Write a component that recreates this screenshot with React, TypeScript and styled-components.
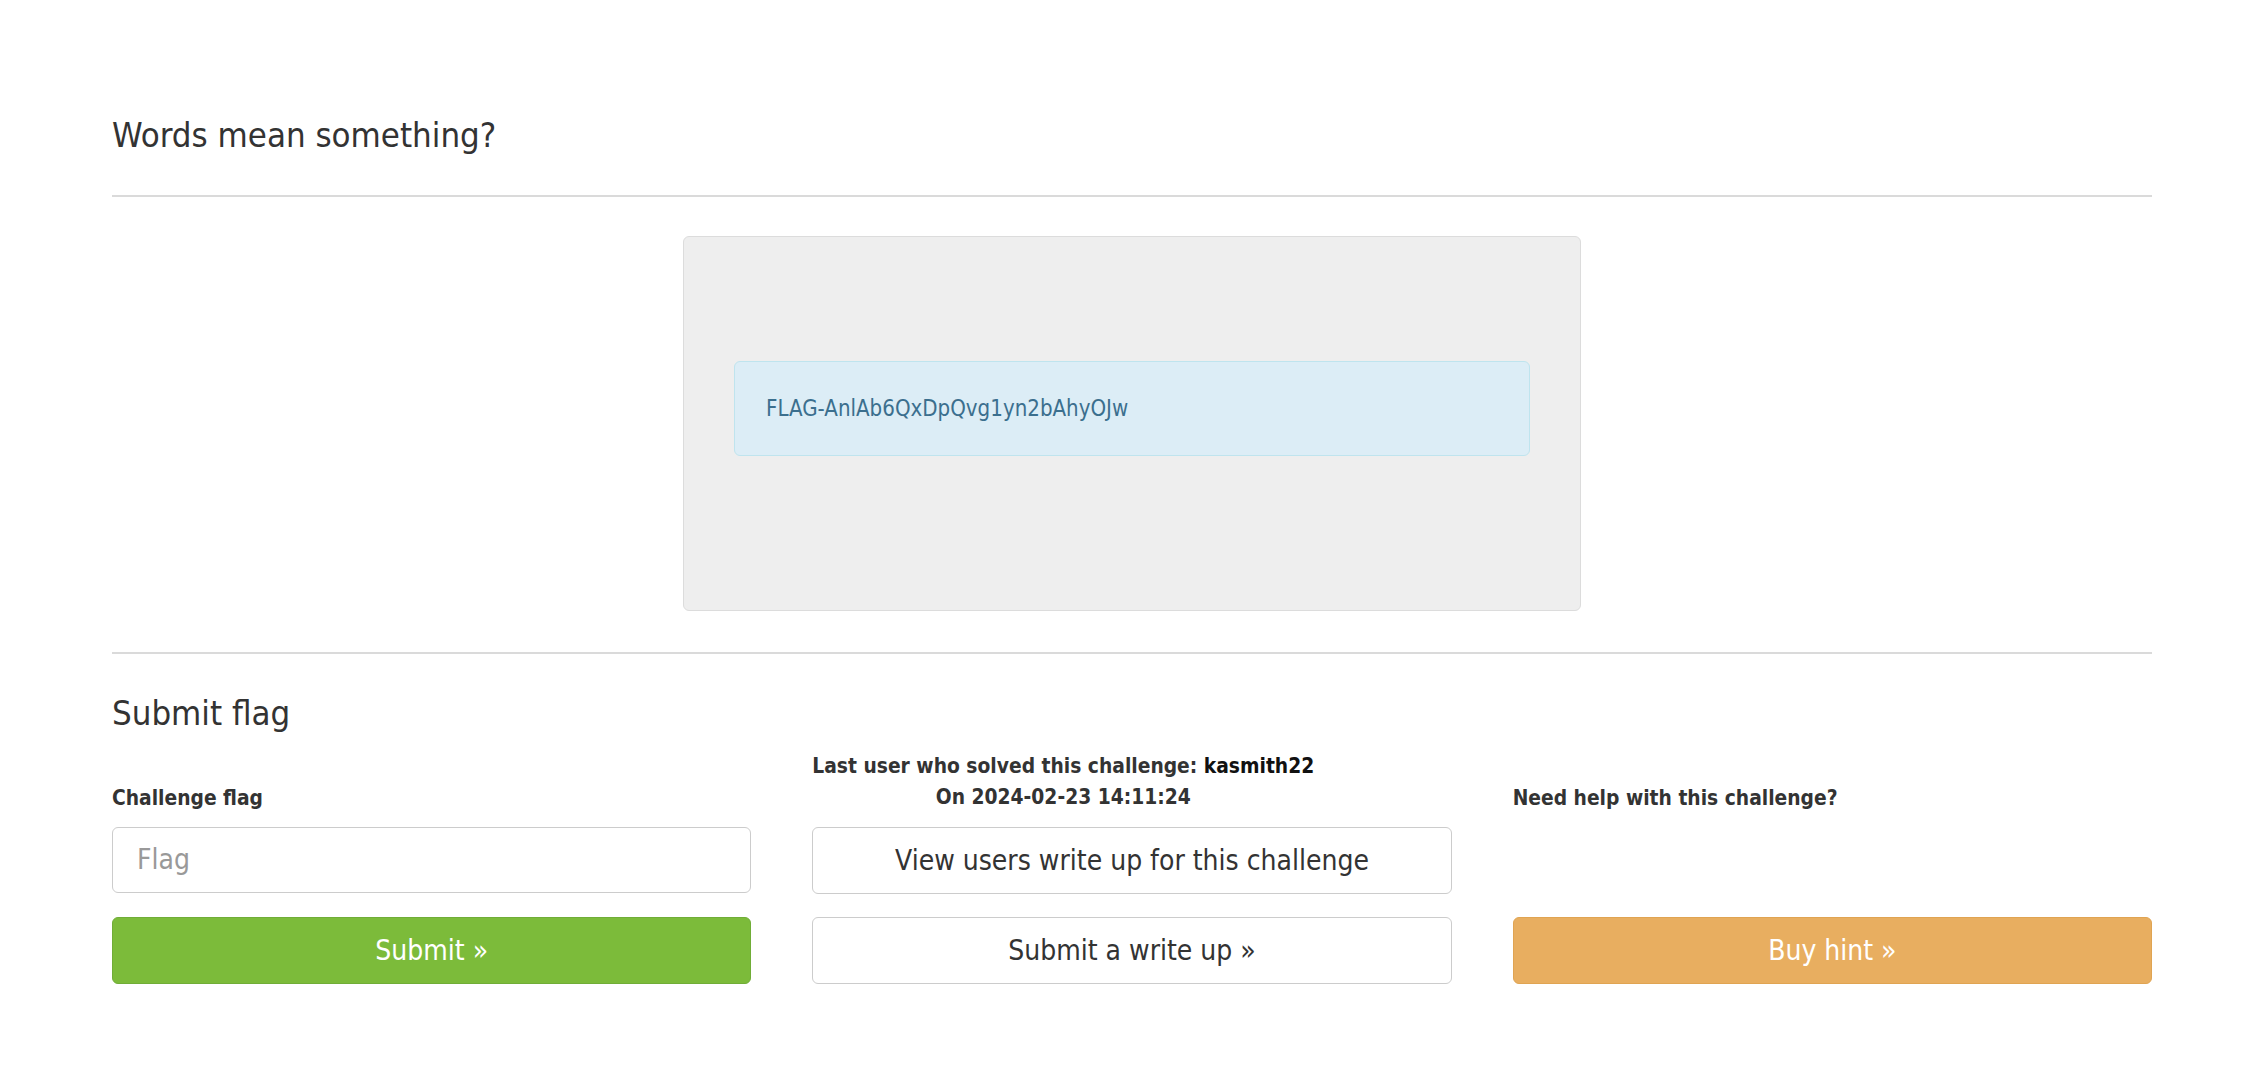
import React from "react";
import styled, { createGlobalStyle } from "styled-components";

const GlobalStyle = createGlobalStyle`
  html, body {
    margin: 0;
    padding: 0;
    background: #ffffff;
  }
  body {
    font-family: "DejaVu Sans Condensed", "DejaVu Sans", sans-serif;
    color: #333333;
  }
  * { box-sizing: border-box; }
`;

const Page = styled.main`
  padding: 116px 110px 90px 112px;
`;

const Heading = styled.h3<{ $top?: number }>`
  margin: ${(p) => p.$top ?? 0}px 0 0;
  font-size: 34.5px;
  line-height: 38px;
  font-weight: 400;
  color: #333333;
`;

const Rule = styled.hr<{ $top: number }>`
  margin: ${(p) => p.$top}px 0 0;
  border: 0;
  border-top: 2px solid #dadada;
  height: 0;
`;

const Well = styled.section`
  width: 898px;
  margin: 39px auto 0;
  padding: 124px 50px 154px;
  background: #eeeeee;
  border: 1px solid #dcdcdc;
  border-radius: 6px;
`;

const InfoAlert = styled.div`
  padding: 31px 31px;
  background: #dcedf6;
  border: 1px solid #bfe4ee;
  border-radius: 6px;
  color: #3b6f8e;
  font-size: 22.1px;
  line-height: 30.8px;
`;

const SubmitGrid = styled.div`
  margin-top: 19px;
  display: grid;
  grid-template-columns: repeat(3, 1fr);
  grid-template-rows: auto 66px auto;
  column-gap: 61px;
  row-gap: 0;
  align-items: end;
`;

const Label = styled.div`
  font-size: 20.8px;
  line-height: 30px;
  font-weight: 700;
  color: #333333;
  margin-bottom: 14px;
`;

const SolvedInfo = styled.div`
  width: fit-content;
  text-align: center;
  font-size: 20.8px;
  line-height: 31px;
  font-weight: 700;
  color: #333333;
  margin-bottom: 14px;
`;

const UserName = styled.span`
  color: #111111;
`;

const FlagInput = styled.input`
  width: 100%;
  height: 66px;
  padding: 0 24px;
  border: 1px solid #cccccc;
  border-radius: 6px;
  background: #ffffff;
  font-family: inherit;
  font-size: 28px;
  color: #333333;
  outline: none;
  align-self: stretch;
  &::placeholder {
    color: #999999;
  }
`;

type Variant = "default" | "success" | "warning";

const palette: Record<Variant, { bg: string; border: string; color: string }> = {
  default: { bg: "#ffffff", border: "#cccccc", color: "#333333" },
  success: { bg: "#7cbb3a", border: "#70ad37", color: "#ffffff" },
  warning: { bg: "#e8ae60", border: "#e0a452", color: "#ffffff" },
};

const Button = styled.button<{ $variant: Variant; $gapTop?: boolean }>`
  width: 100%;
  height: 67px;
  display: flex;
  align-items: center;
  justify-content: center;
  padding: 0 20px;
  background: ${(p) => palette[p.$variant].bg};
  border: 1px solid ${(p) => palette[p.$variant].border};
  border-radius: 6px;
  color: ${(p) => palette[p.$variant].color};
  font-family: inherit;
  font-size: 28px;
  font-weight: 400;
  cursor: pointer;
  align-self: stretch;
  margin-top: ${(p) => (p.$gapTop ? "24px" : "0")};
`;

const Spacer = styled.div``;

export default function App() {
  return (
    <>
      <GlobalStyle />
      <Page>
        <Heading>Words mean something?</Heading>
        <Rule $top={41} />
        <Well>
          <InfoAlert>FLAG-AnlAb6QxDpQvg1yn2bAhyOJw</InfoAlert>
        </Well>
        <Rule $top={41} />
        <Heading $top={40}>Submit flag</Heading>
        <SubmitGrid>
          <Label>Challenge flag</Label>
          <SolvedInfo>
            Last user who solved this challenge: <UserName>kasmith22</UserName>
            <br />
            On 2024-02-23 14:11:24
          </SolvedInfo>
          <Label>Need help with this challenge?</Label>

          <FlagInput placeholder="Flag" />
          <Button $variant="default">View users write up for this challenge</Button>
          <Spacer />

          <Button $variant="success" $gapTop>
            Submit »
          </Button>
          <Button $variant="default" $gapTop>
            Submit a write up »
          </Button>
          <Button $variant="warning" $gapTop>
            Buy hint »
          </Button>
        </SubmitGrid>
      </Page>
    </>
  );
}
